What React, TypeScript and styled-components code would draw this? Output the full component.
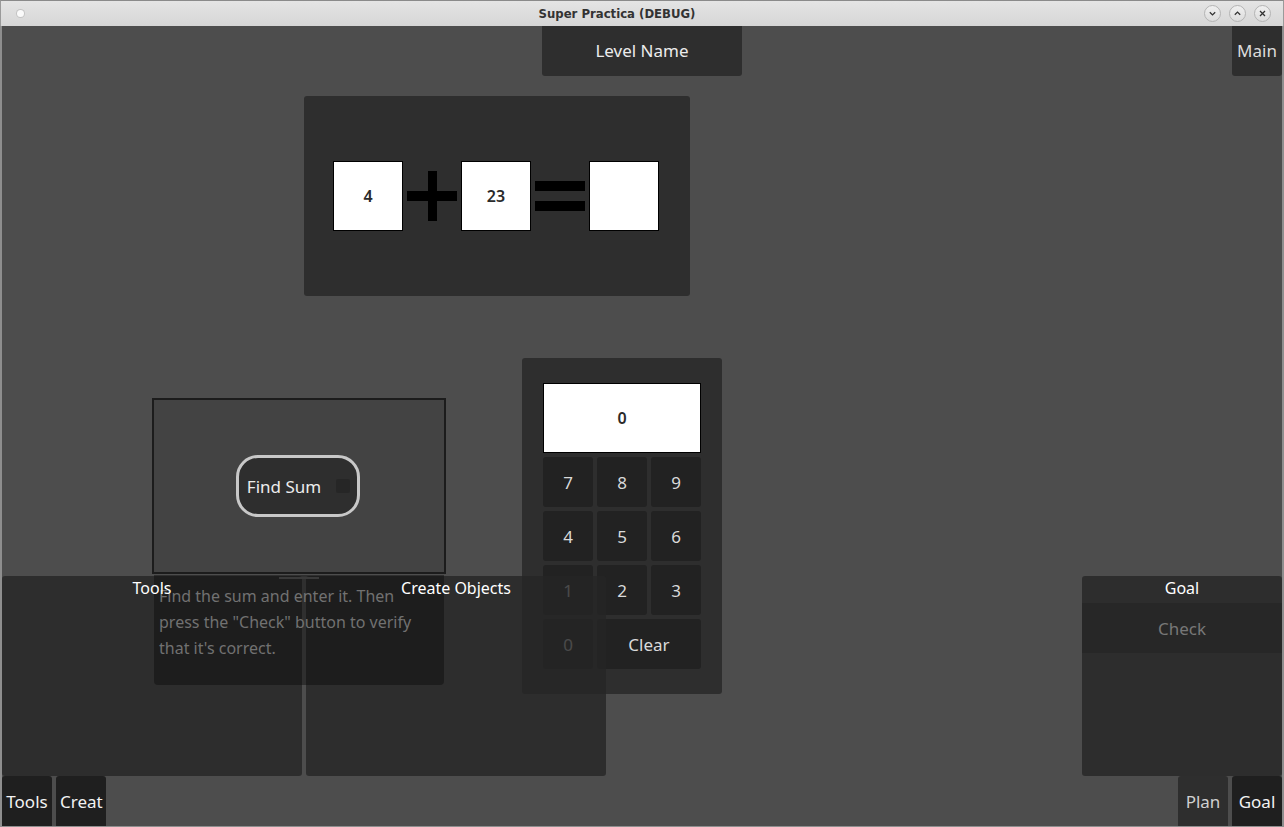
import React from "react";
import styled, { createGlobalStyle } from "styled-components";

const keys = ["7", "8", "9", "4", "5", "6", "1", "2", "3", "0"];

const App = () => {
    return (
        <>
            <GlobalStyle />
            <Window>
                <TitleBar>
                    <TitleLeft>
                        <MenuDot />
                    </TitleLeft>
                    <TitleText>Super Practica (DEBUG)</TitleText>
                    <TitleButtons>
                        <WinButton>
                            <svg width="9" height="9" viewBox="0 0 9 9">
                                <path d="M1.8 3.2 L4.5 5.9 L7.2 3.2" fill="none" stroke="#333" strokeWidth="1.3" />
                            </svg>
                        </WinButton>
                        <WinButton>
                            <svg width="9" height="9" viewBox="0 0 9 9">
                                <path d="M1.8 5.8 L4.5 3.1 L7.2 5.8" fill="none" stroke="#333" strokeWidth="1.3" />
                            </svg>
                        </WinButton>
                        <WinButton>
                            <svg width="9" height="9" viewBox="0 0 9 9">
                                <path d="M2 2 L7 7 M7 2 L2 7" fill="none" stroke="#333" strokeWidth="1.3" />
                            </svg>
                        </WinButton>
                    </TitleButtons>
                </TitleBar>

                <Viewport>
                    {/* игровое поле */}
                    <EquationPanel>
                        <NumberBox>4</NumberBox>
                        <Symbol width="50" height="50" viewBox="0 0 50 50">
                            <rect x="0" y="20" width="50" height="10" fill="#000" />
                            <rect x="21" y="0" width="9" height="50" fill="#000" />
                        </Symbol>
                        <NumberBox>23</NumberBox>
                        <Symbol width="50" height="50" viewBox="0 0 50 50">
                            <rect x="0" y="10" width="50" height="10" fill="#000" />
                            <rect x="0" y="30" width="50" height="10" fill="#000" />
                        </Symbol>
                        <NumberBox />
                    </EquationPanel>

                    <TaskCard>
                        <TaskPill>
                            <span>Find Sum</span>
                            <TaskIndicator />
                        </TaskPill>
                    </TaskCard>

                    <Hint>
                        Find the sum and enter it. Then
                        <br />
                        press the "Check" button to verify
                        <br />
                        that it's correct.
                    </Hint>

                    <Keypad>
                        <KeypadDisplay>0</KeypadDisplay>
                        {keys.map((k) => (
                            <Key key={k}>{k}</Key>
                        ))}
                        <Key $wide>Clear</Key>
                    </Keypad>

                    {/* интерфейс поверх поля */}
                    <Hud>
                        <TopRow>
                            <LevelName>Level Name</LevelName>
                            <CornerButton>Main</CornerButton>
                        </TopRow>
                        <Spacer />
                        <DockRow>
                            <DockPanel $width={300}>
                                <DockTitle>Tools</DockTitle>
                            </DockPanel>
                            <DockPanel $width={300}>
                                <DockTitle>Create Objects</DockTitle>
                            </DockPanel>
                            <DockPanel $width={200} $right>
                                <DockTitle>Goal</DockTitle>
                                <CheckRow>Check</CheckRow>
                            </DockPanel>
                        </DockRow>
                        <ButtonRow>
                            <TabButton $active>Tools</TabButton>
                            <TabButton $active $left>Creat</TabButton>
                            <TabButton $push>Plan</TabButton>
                            <TabButton $active>Goal</TabButton>
                        </ButtonRow>
                    </Hud>
                </Viewport>
            </Window>
        </>
    );
};

export default App;

const GlobalStyle = createGlobalStyle`
    * {
        box-sizing: border-box;
    }
    html, body {
        margin: 0;
        padding: 0;
        width: 1284px;
        height: 827px;
        overflow: hidden;
        background: #4d4d4d;
    }
    body {
        font-family: "Noto Sans", "Open Sans", sans-serif;
    }
`;

const Window = styled.div`
    width: 1284px;
    height: 827px;
    display: flex;
    flex-direction: column;
    background: #4d4d4d;
`;

const TitleBar = styled.header`
    height: 26px;
    display: flex;
    align-items: center;
    background: linear-gradient(#e4e4e4, #d6d6d6);
    border-top: 1px solid #8a8a8a;
    border-left: 1px solid #9a9a9a;
    border-right: 1px solid #9a9a9a;
`;

const TitleLeft = styled.div`
    width: 34px;
    padding-left: 16px;
    display: flex;
    align-items: center;
`;

const MenuDot = styled.span`
    width: 7px;
    height: 7px;
    border-radius: 50%;
    background: #fafafa;
    box-shadow: 0 0 0 1px #c4c4c4;
`;

const TitleText = styled.div`
    flex: 1;
    text-align: center;
    font-family: "DejaVu Sans Condensed", "DejaVu Sans", sans-serif;
    font-weight: bold;
    font-size: 13px;
    color: #333;
`;

const TitleButtons = styled.div`
    width: 84px;
    padding-left: 5px;
    display: flex;
    gap: 8px;
    align-items: center;
`;

const WinButton = styled.span`
    width: 17px;
    height: 17px;
    border-radius: 50%;
    border: 1px solid #b4b4b4;
    background: linear-gradient(#f0f0f0, #dcdcdc);
    display: flex;
    justify-content: center;
    align-items: center;
`;

const Viewport = styled.main`
    position: relative;
    flex: 1;
    background: #4d4d4d;
    border-left: 2px solid #8e8e8e;
    border-right: 2px solid #8e8e8e;
    border-bottom: 1px solid #8e8e8e;
    overflow: hidden;
`;

const EquationPanel = styled.section`
    position: absolute;
    left: 302px;
    top: 70px;
    width: 386px;
    height: 200px;
    background: #2e2e2e;
    border-radius: 3px;
    display: flex;
    justify-content: center;
    align-items: center;
    gap: 4px;
    padding-right: 2px;
`;

const NumberBox = styled.div`
    width: 70px;
    height: 70px;
    background: #fff;
    border: 1px solid #000;
    display: flex;
    justify-content: center;
    align-items: center;
    font-size: 16px;
    font-weight: 600;
    color: #2a2a2a;
`;

const Symbol = styled.svg`
    display: block;
`;

const TaskCard = styled.div`
    position: absolute;
    left: 150px;
    top: 372px;
    width: 294px;
    height: 176px;
    background: #434343;
    border: 2px solid #1c1c1c;
    display: flex;
    justify-content: center;
    align-items: center;
    padding-right: 2px;
`;

const TaskPill = styled.div`
    height: 62px;
    padding: 0 7px 0 8px;
    border: 3px solid #c8c8c8;
    border-radius: 22px;
    background: #2e2e2e;
    display: flex;
    align-items: center;
    gap: 15px;
    font-size: 17px;
    color: #ececec;
`;

const TaskIndicator = styled.span`
    width: 14px;
    height: 14px;
    border-radius: 2px;
    background: #262626;
`;

const Hint = styled.div`
    position: absolute;
    z-index: 1;
    left: 152px;
    top: 549px;
    width: 290px;
    height: 110px;
    padding: 8px 5px;
    background: rgba(10, 10, 10, 0.45);
    border-radius: 0 0 4px 4px;
    font-size: 16px;
    line-height: 26px;
    color: #717171;
    white-space: nowrap;

    &::before {
        content: "";
        position: absolute;
        left: 125px;
        top: 2px;
        width: 40px;
        height: 2px;
        background: #3a3a3a;
    }
`;

const Keypad = styled.section`
    position: absolute;
    left: 520px;
    top: 332px;
    width: 200px;
    height: 336px;
    padding: 25px 21px;
    background: #2e2e2e;
    border-radius: 3px;
    display: grid;
    grid-template-columns: repeat(3, 50px);
    grid-template-rows: 70px repeat(4, 50px);
    gap: 4px;
`;

const KeypadDisplay = styled.div`
    grid-column: 1 / -1;
    background: #fff;
    border: 1px solid #000;
    display: flex;
    justify-content: center;
    align-items: center;
    font-size: 16px;
    font-weight: 600;
    color: #2a2a2a;
`;

const Key = styled.div<{ $wide?: boolean }>`
    grid-column: ${(p) => (p.$wide ? "span 2" : "auto")};
    background: #222;
    border-radius: 3px;
    display: flex;
    justify-content: center;
    align-items: center;
    font-size: 17px;
    color: #dadada;
`;

const Hud = styled.div`
    position: absolute;
    inset: 0;
    display: flex;
    flex-direction: column;
`;

const TopRow = styled.div`
    height: 50px;
    display: grid;
    grid-template-columns: 1fr 200px 1fr;
`;

const LevelName = styled.div`
    grid-column: 2;
    background: #2e2e2e;
    border-radius: 0 0 3px 3px;
    display: flex;
    justify-content: center;
    align-items: center;
    padding-bottom: 1px;
    font-size: 17px;
    color: #ececec;
`;

const CornerButton = styled.div`
    grid-column: 3;
    justify-self: end;
    width: 50px;
    background: #2e2e2e;
    border-radius: 0 0 3px 3px;
    display: flex;
    justify-content: center;
    align-items: center;
    padding-bottom: 1px;
    font-size: 17px;
    color: #dcdcdc;
`;

const Spacer = styled.div`
    flex: 1;
`;

const DockRow = styled.div`
    height: 200px;
    display: flex;
    gap: 4px;
`;

const DockPanel = styled.div<{ $width: number; $right?: boolean }>`
    width: ${(p) => p.$width}px;
    margin-left: ${(p) => (p.$right ? "auto" : "0")};
    background: rgba(38, 38, 38, 0.8);
    border-radius: 3px;
    display: flex;
    flex-direction: column;
`;

const DockTitle = styled.div`
    position: relative;
    z-index: 2;
    height: 27px;
    line-height: 24px;
    text-align: center;
    font-size: 16px;
    color: #fff;
`;

const CheckRow = styled.div`
    height: 50px;
    background: rgba(0, 0, 0, 0.12);
    display: flex;
    justify-content: center;
    align-items: center;
    font-size: 17px;
    color: #777;
`;

const ButtonRow = styled.div`
    height: 50px;
    display: flex;
    gap: 4px;
`;

const TabButton = styled.div<{ $active?: boolean; $left?: boolean; $push?: boolean }>`
    width: 50px;
    margin-left: ${(p) => (p.$push ? "auto" : "0")};
    background: ${(p) => (p.$active ? "#1f1f1f" : "#2e2e2e")};
    border-radius: 3px 3px 0 0;
    display: flex;
    justify-content: ${(p) => (p.$left ? "flex-start" : "center")};
    padding-left: ${(p) => (p.$left ? "4px" : "0")};
    align-items: center;
    overflow: hidden;
    white-space: nowrap;
    font-size: 17px;
    color: ${(p) => (p.$active ? "#f2f2f2" : "#d0d0d0")};
`;
